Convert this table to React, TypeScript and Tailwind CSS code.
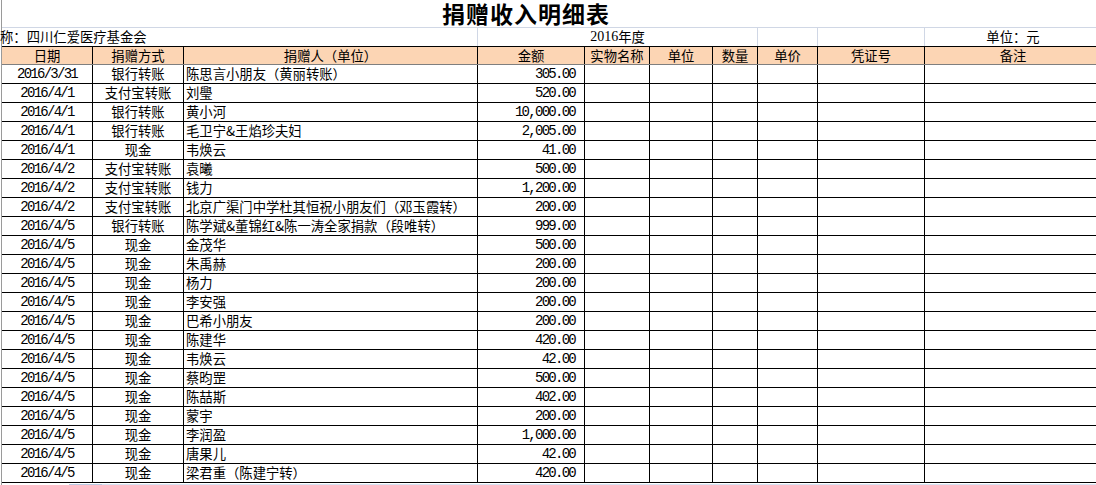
import React from "react";

type Row = [string, string, string, string];

const rows: Row[] = [
  ["2016/3/31", "银行转账", "陈思言小朋友（黄丽转账）", "305.00"],
  ["2016/4/1", "支付宝转账", "刘璺", "520.00"],
  ["2016/4/1", "银行转账", "黄小河", "10,000.00"],
  ["2016/4/1", "银行转账", "毛卫宁&王焰珍夫妇", "2,005.00"],
  ["2016/4/1", "现金", "韦焕云", "41.00"],
  ["2016/4/2", "支付宝转账", "袁曦", "500.00"],
  ["2016/4/2", "支付宝转账", "钱力", "1,200.00"],
  ["2016/4/2", "支付宝转账", "北京广渠门中学杜其恒祝小朋友们（邓玉霞转）", "200.00"],
  ["2016/4/5", "银行转账", "陈学斌&董锦红&陈一涛全家捐款（段唯转）", "999.00"],
  ["2016/4/5", "现金", "金茂华", "500.00"],
  ["2016/4/5", "现金", "朱禹赫", "200.00"],
  ["2016/4/5", "现金", "杨力", "200.00"],
  ["2016/4/5", "现金", "李安强", "200.00"],
  ["2016/4/5", "现金", "巴希小朋友", "200.00"],
  ["2016/4/5", "现金", "陈建华", "420.00"],
  ["2016/4/5", "现金", "韦焕云", "42.00"],
  ["2016/4/5", "现金", "蔡昀罡", "500.00"],
  ["2016/4/5", "现金", "陈喆斯", "402.00"],
  ["2016/4/5", "现金", "蒙宇", "200.00"],
  ["2016/4/5", "现金", "李润盈", "1,000.00"],
  ["2016/4/5", "现金", "唐果儿", "42.00"],
  ["2016/4/5", "现金", "梁君重（陈建宁转）", "420.00"],
];

const headers = ["日期", "捐赠方式", "捐赠人（单位）", "金额", "实物名称", "单位", "数量", "单价", "凭证号", "备注"];

const colW = [
  "w-[91px]",
  "w-[91px]",
  "w-[294px]",
  "w-[107px]",
  "w-[65px]",
  "w-[63px]",
  "w-[45px]",
  "w-[60px]",
  "w-[107px]",
  "w-[176px]",
];

const mono = "font-['Liberation_Mono',monospace] text-[14px] tracking-[-1.73px]";

export default function App() {
  return (
    <div className="w-[1096px] h-[485px] overflow-hidden bg-white pl-[1px] text-black font-['Noto_Sans_CJK_SC','Noto_Sans',sans-serif] text-[13.33px] leading-[18px]">
      <div className="border-l border-l-[#9a9a9a] w-[1100px] h-[485px] flex flex-col">
        {/* Title row */}
        <div className="h-[28px] shrink-0 border-b border-b-[#d0d7e5] flex items-center pl-[440px]">
          <span className="text-[23px] leading-[27px] font-bold tracking-[1px]">捐赠收入明细表</span>
        </div>
        {/* Subtitle row */}
        <div className="h-[18px] shrink-0 flex items-center">
          <div className="w-[476px] h-full border-r border-r-[#d0d7e5] flex items-center whitespace-nowrap">
            <span className="-ml-[2px]">称：四川仁爱医疗基金会</span>
          </div>
          <div className="w-[280px] h-full border-r border-r-[#d0d7e5] flex items-center justify-center">
            <span className="font-['Liberation_Serif',serif] text-[14px]">2016</span>
            <span>年度</span>
          </div>
          <div className="w-[60px] h-full border-r border-r-[#d0d7e5]" />
          <div className="w-[107px] h-full border-r border-r-[#d0d7e5]" />
          <div className="w-[176px] h-full flex items-center justify-center">单位：元</div>
        </div>
        {/* Header row */}
        <div className="h-[19px] shrink-0 flex border-t border-t-black border-b border-b-[#7f7f7f] bg-[#fcd5b4]">
          {headers.map((h, i) => (
            <div
              key={i}
              className={`${colW[i]} shrink-0 h-full flex items-center justify-center whitespace-nowrap ${
                i < 9 ? "border-r border-r-black" : ""
              }`}
            >
              {h}
            </div>
          ))}
        </div>
        {/* Data rows */}
        {rows.map((r, ri) => (
          <div key={ri} className="h-[19px] shrink-0 flex border-b border-b-black">
            <div className={`${colW[0]} shrink-0 h-full border-r border-r-black flex items-center justify-center`}>
              <span className={mono}>{r[0]}</span>
            </div>
            <div className={`${colW[1]} shrink-0 h-full border-r border-r-black flex items-center justify-center`}>
              {r[1]}
            </div>
            <div className={`${colW[2]} shrink-0 h-full border-r border-r-black flex items-center pl-[2px] whitespace-nowrap overflow-hidden`}>
              {r[2]}
            </div>
            <div className={`${colW[3]} shrink-0 h-full border-r border-r-black flex items-center justify-end pr-[9px]`}>
              <span className={mono}>{r[3]}</span>
            </div>
            <div className={`${colW[4]} shrink-0 h-full border-r border-r-black`} />
            <div className={`${colW[5]} shrink-0 h-full border-r border-r-black`} />
            <div className={`${colW[6]} shrink-0 h-full border-r border-r-black`} />
            <div className={`${colW[7]} shrink-0 h-full border-r border-r-black`} />
            <div className={`${colW[8]} shrink-0 h-full border-r border-r-black`} />
            <div className={`${colW[9]} shrink-0 h-full`} />
          </div>
        ))}
        {/* Bottom scroll edge */}
        <div className="h-[1px] shrink-0" />
        <div className="h-[2px] shrink-0 flex">
          <div className="w-[67px]" />
          <div className="w-[33px] bg-[#b9cbe4]" />
          <div className="flex-1 bg-[#d6e3f3]" />
        </div>
      </div>
    </div>
  );
}
